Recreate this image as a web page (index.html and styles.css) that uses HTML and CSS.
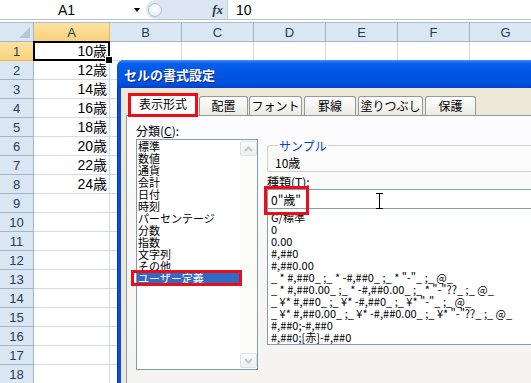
FILE: index.html
```html
<!DOCTYPE html>
<html lang="ja">
<head>
    <meta charset="UTF-8">
    <title>セルの書式設定</title>
    <link rel="stylesheet" href="styles.css">
</head>
<body>
<div class="app">
    <div class="formula-bar">
        <div class="name-box">
            <span class="cell-ref">A1</span>
            <span class="drop-arrow"></span>
        </div>
        <div class="fx-zone">
            <span class="knob"></span>
            <span class="fx">fx</span>
        </div>
        <div class="formula">10</div>
    </div>
    <div class="bar-gap"></div>

    <div class="sheet">
        <div class="hd corner"></div><div class="hd active">A</div><div class="hd">B</div><div class="hd">C</div><div class="hd">D</div><div class="hd">E</div><div class="hd">F</div><div class="hd">G</div>
        <div class="rh active">1</div><div class="c num sel">10歳</div><div class="c"></div><div class="c"></div><div class="c"></div><div class="c"></div><div class="c"></div><div class="c"></div>
        <div class="rh">2</div><div class="c num">12歳</div><div class="c"></div><div class="c"></div><div class="c"></div><div class="c"></div><div class="c"></div><div class="c"></div>
        <div class="rh">3</div><div class="c num">14歳</div><div class="c"></div><div class="c"></div><div class="c"></div><div class="c"></div><div class="c"></div><div class="c"></div>
        <div class="rh">4</div><div class="c num">16歳</div><div class="c"></div><div class="c"></div><div class="c"></div><div class="c"></div><div class="c"></div><div class="c"></div>
        <div class="rh">5</div><div class="c num">18歳</div><div class="c"></div><div class="c"></div><div class="c"></div><div class="c"></div><div class="c"></div><div class="c"></div>
        <div class="rh">6</div><div class="c num">20歳</div><div class="c"></div><div class="c"></div><div class="c"></div><div class="c"></div><div class="c"></div><div class="c"></div>
        <div class="rh">7</div><div class="c num">22歳</div><div class="c"></div><div class="c"></div><div class="c"></div><div class="c"></div><div class="c"></div><div class="c"></div>
        <div class="rh">8</div><div class="c num">24歳</div><div class="c"></div><div class="c"></div><div class="c"></div><div class="c"></div><div class="c"></div><div class="c"></div>
        <div class="rh">9</div><div class="c"></div><div class="c"></div><div class="c"></div><div class="c"></div><div class="c"></div><div class="c"></div><div class="c"></div>
        <div class="rh">10</div><div class="c"></div><div class="c"></div><div class="c"></div><div class="c"></div><div class="c"></div><div class="c"></div><div class="c"></div>
        <div class="rh">11</div><div class="c"></div><div class="c"></div><div class="c"></div><div class="c"></div><div class="c"></div><div class="c"></div><div class="c"></div>
        <div class="rh">12</div><div class="c"></div><div class="c"></div><div class="c"></div><div class="c"></div><div class="c"></div><div class="c"></div><div class="c"></div>
        <div class="rh">13</div><div class="c"></div><div class="c"></div><div class="c"></div><div class="c"></div><div class="c"></div><div class="c"></div><div class="c"></div>
        <div class="rh">14</div><div class="c"></div><div class="c"></div><div class="c"></div><div class="c"></div><div class="c"></div><div class="c"></div><div class="c"></div>
        <div class="rh">15</div><div class="c"></div><div class="c"></div><div class="c"></div><div class="c"></div><div class="c"></div><div class="c"></div><div class="c"></div>
        <div class="rh">16</div><div class="c"></div><div class="c"></div><div class="c"></div><div class="c"></div><div class="c"></div><div class="c"></div><div class="c"></div>
        <div class="rh">17</div><div class="c"></div><div class="c"></div><div class="c"></div><div class="c"></div><div class="c"></div><div class="c"></div><div class="c"></div>
        <div class="rh">18</div><div class="c"></div><div class="c"></div><div class="c"></div><div class="c"></div><div class="c"></div><div class="c"></div><div class="c"></div>
    </div>

    <div class="dialog">
        <div class="dlg-title">セルの書式設定</div>
        <div class="dlg-body">
            <div class="tabs">
                <div class="tab current">表示形式</div>
                <div class="tab w-haichi">配置</div>
                <div class="tab w-font">フォント</div>
                <div class="tab w-keisen">罫線</div>
                <div class="tab w-nuri">塗りつぶし</div>
                <div class="tab w-hogo">保護</div>
            </div>
            <div class="panel">
                <div class="col-left">
                    <div class="lbl">分類(<u>C</u>):</div>
                    <div class="cat-list">
                        <ul class="items">
                            <li>標準</li>
                            <li>数値</li>
                            <li>通貨</li>
                            <li>会計</li>
                            <li>日付</li>
                            <li>時刻</li>
                            <li>パーセンテージ</li>
                            <li>分数</li>
                            <li>指数</li>
                            <li>文字列</li>
                            <li>その他</li>
                            <li class="picked">ユーザー定義</li>
                        </ul>
                        <div class="vscroll">
                            <span class="sb-btn">
                                <svg width="9" height="6" viewBox="0 0 9 6"><path d="M1 5 L4.5 1.5 L8 5" fill="none" stroke="#c3c7cf" stroke-width="2"/></svg>
                            </span>
                            <span class="sb-btn">
                                <svg width="9" height="6" viewBox="0 0 9 6"><path d="M1 1 L4.5 4.5 L8 1" fill="none" stroke="#c3c7cf" stroke-width="2"/></svg>
                            </span>
                        </div>
                    </div>
                </div>
                <div class="col-right">
                    <fieldset class="sample">
                        <legend>サンプル</legend>
                        10歳
                    </fieldset>
                    <div class="lbl type-lbl">種類(<u>T</u>):</div>
                    <div class="type-input">
                        <span class="type-text">0"歳"</span>
                        <svg class="ibeam" width="7" height="16" viewBox="0 0 7 16"><path d="M0 0.5 H7 M3.5 0.5 V15.5 M0 15.5 H7" fill="none" stroke="#000" stroke-width="1"/></svg>
                    </div>
                    <ul class="fmt-list">
                        <li>G/標準</li>
                        <li>0</li>
                        <li>0.00</li>
                        <li>#,##0</li>
                        <li>#,##0.00</li>
                        <li>_ * #,##0_ ;_ * -#,##0_ ;_ * "-"_ ;_ @_ </li>
                        <li>_ * #,##0.00_ ;_ * -#,##0.00_ ;_ * "-"??_ ;_ @_ </li>
                        <li>_ ¥* #,##0_ ;_ ¥* -#,##0_ ;_ ¥* "-"_ ;_ @_ </li>
                        <li>_ ¥* #,##0.00_ ;_ ¥* -#,##0.00_ ;_ ¥* "-"??_ ;_ @_ </li>
                        <li>#,##0;-#,##0</li>
                        <li>#,##0;[赤]-#,##0</li>
                    </ul>
                </div>
            </div>
        </div>
    </div>
</div>
</body>
</html>
```

FILE: styles.css
```css
* {
    box-sizing: border-box;
}

body {
    margin: 0;
    background-color: #fff;
    font-family: 'Liberation Sans', 'Noto Sans CJK JP', sans-serif;
    color: #000;
}

.app {
    position: relative;
    width: 531px;
    height: 383px;
    overflow: hidden;
}

/* formula bar */
.formula-bar {
    display: flex;
    height: 20px;
    border-bottom: 1px solid #b9c5d4;
    font-size: 14px;
}

.name-box {
    width: 146px;
    display: flex;
    align-items: center;
}

.cell-ref {
    width: 133px;
    text-align: center;
}

.drop-arrow {
    width: 0;
    height: 0;
    border-left: 3px solid transparent;
    border-right: 3px solid transparent;
    border-top: 4px solid #000;
    margin-left: 1px;
}

.fx-zone {
    width: 81px;
    display: flex;
    align-items: center;
    justify-content: space-between;
    background-color: #dce6f2;
    border-radius: 10px 0 0 10px;
    padding: 0 4px 0 2px;
}

.knob {
    width: 14px;
    height: 14px;
    border-radius: 50%;
    border: 1px solid #b3c3d7;
    background: radial-gradient(circle at 50% 40%, #ffffff, #dfe7f2);
}

.fx {
    font-family: 'Liberation Serif', serif;
    font-style: italic;
    font-weight: bold;
    font-size: 13px;
    color: #1f3a5e;
}

.formula {
    flex: 1;
    border-left: 1px solid #c3cfdd;
    padding-left: 8px;
    display: flex;
    align-items: center;
}

.bar-gap {
    height: 3px;
    border-bottom: 1px solid #a9bbd0;
}

/* sheet */
.sheet {
    display: grid;
    grid-template-columns: 34px 76px repeat(6, 72px);
    grid-auto-rows: 19px;
}

.hd, .rh {
    display: flex;
    align-items: center;
    justify-content: center;
    background-color: #dbe6f3;
    border-right: 1px solid #9fb5ce;
    border-bottom: 1px solid #9fb5ce;
    font-size: 13px;
    color: #233d60;
}

.hd.active, .rh.active {
    background: linear-gradient(#fde3a0, #f8d27c);
    border-color: #e9b957;
}

.corner {
    position: relative;
}

.corner::after {
    content: '';
    position: absolute;
    right: 3px;
    bottom: 3px;
    border-left: 11px solid transparent;
    border-bottom: 11px solid #b6c6d9;
}

.c {
    border-right: 1px solid #d3d9e5;
    border-bottom: 1px solid #d3d9e5;
    font-size: 14px;
    line-height: 18px;
}

.num {
    text-align: right;
    padding-right: 2px;
}

.sel {
    position: relative;
    z-index: 2;
}

.sel::after {
    content: '';
    position: absolute;
    top: -1px;
    left: -1px;
    right: -1px;
    bottom: -1px;
    border: 2px solid #000;
}

.sel::before {
    content: '';
    position: absolute;
    right: -4px;
    bottom: -4px;
    width: 6px;
    height: 6px;
    background-color: #000;
    border: 1px solid #fff;
    z-index: 1;
}

/* dialog */
.dialog {
    position: absolute;
    left: 117px;
    top: 60px;
    width: 470px;
    height: 340px;
    background-color: #0a4ee0;
    border-radius: 7px 7px 0 0;
    padding-left: 3px;
    border-left: 1px solid #0831b0;
    display: flex;
    flex-direction: column;
    z-index: 5;
}

.dlg-title {
    height: 28px;
    margin-left: -4px;
    padding-left: 7px;
    border-radius: 7px 7px 0 0;
    background: linear-gradient(#3d8ff8 0, #0a60ec 12%, #0056e6 45%, #0052df 80%, #0043c8 100%);
    color: #fff;
    font-family: 'Noto Sans CJK JP', sans-serif;
    font-weight: bold;
    font-size: 13px;
    line-height: 29px;
    text-shadow: 1px 1px 0 #0b2a8a;
}

.dlg-body {
    flex: 1;
    background-color: #ece9d8;
    padding-left: 5px;
    display: flex;
    flex-direction: column;
    font-family: 'Noto Sans CJK JP', sans-serif;
    font-size: 12px;
}

.tabs {
    height: 27px;
    display: flex;
    align-items: flex-end;
    padding-left: 2px;
}

.tab {
    height: 19px;
    margin-left: 1px;
    border: 1px solid #919b9c;
    border-bottom: none;
    border-radius: 3px 3px 0 0;
    background: linear-gradient(#ffffff, #eceae3);
    display: flex;
    align-items: center;
    justify-content: center;
    line-height: 1;
}

.tab.current {
    width: 70px;
    height: 24px;
    margin-left: 0;
    margin-bottom: -2px;
    border: 3px solid #ea0e17;
    border-radius: 0;
    background: #fcfcfe;
    position: relative;
    z-index: 1;
    padding-bottom: 2px;
}

.w-haichi { width: 49px; }
.w-font { width: 53px; }
.w-keisen { width: 52px; margin-left: 2px; }
.w-nuri { width: 65px; margin-left: 2px; }
.w-hogo { width: 51px; margin-left: 2px; }

.panel {
    flex: 1;
    display: flex;
    gap: 9px;
    padding: 8px 0 0 9px;
    border: 1px solid #919b9c;
    border-right: none;
    background: linear-gradient(#fcfcfe, #f4f3ee);
}

.lbl {
    line-height: 13px;
    font-size: 12px;
}

.col-left {
    width: 122px;
    display: flex;
    flex-direction: column;
}

.cat-list {
    margin-top: 2px;
    height: 231px;
    border: 1px solid #7f9db9;
    background-color: #fff;
    display: flex;
}

.items {
    flex: 1;
    list-style: none;
    margin: 0;
    padding: 0;
    font-size: 11px;
    line-height: 12px;
}

.items li {
    padding-left: 1px;
    height: 12px;
    white-space: nowrap;
}

.items li.picked {
    background-color: #316ac5;
    color: #fff;
    position: relative;
}

.items li.picked::after {
    content: '';
    position: absolute;
    top: -2px;
    bottom: -2px;
    left: -6px;
    right: -2px;
    border: 3px solid #ea0e17;
}

.vscroll {
    width: 17px;
    display: flex;
    flex-direction: column;
    justify-content: space-between;
    background-color: #fbfbf8;
    padding: 1px 0;
}

.sb-btn {
    height: 15px;
    border: 1px solid #dfe1e6;
    border-radius: 2px;
    background: linear-gradient(#fbfbfb, #eeeef0);
    display: flex;
    align-items: center;
    justify-content: center;
}

.col-right {
    flex: 1;
    display: flex;
    flex-direction: column;
}

.sample {
    margin: 15px 0 0;
    padding: 4px 0 2px 7px;
    border: 1px solid #d0d0bf;
    border-right: none;
    border-radius: 3px 0 0 3px;
    line-height: 13px;
}

.sample legend {
    color: #0046d5;
    padding: 0 1px;
    margin-left: 3px;
    line-height: 13px;
}

.type-lbl {
    margin-top: 3px;
}

.type-input {
    margin-top: 1px;
    height: 20px;
    border: 1px solid #7f9db9;
    border-right: none;
    background-color: #fff;
    padding-left: 3px;
    display: flex;
    align-items: center;
    position: relative;
}

.type-text {
    position: relative;
}

.type-text::after {
    content: '';
    position: absolute;
    left: -7px;
    top: -5px;
    width: 39px;
    height: 23px;
    border: 3px solid #ea0e17;
}

.ibeam {
    position: absolute;
    left: 108px;
    top: 3px;
}

.fmt-list {
    list-style: none;
    margin: 0;
    padding: 2px 0 0 3px;
    height: 136px;
    border-left: 1px solid #7f9db9;
    border-bottom: 1px solid #7f9db9;
    background-color: #fff;
    font-size: 11px;
    line-height: 12px;
}

.fmt-list li {
    height: 12px;
    white-space: pre;
}
```
